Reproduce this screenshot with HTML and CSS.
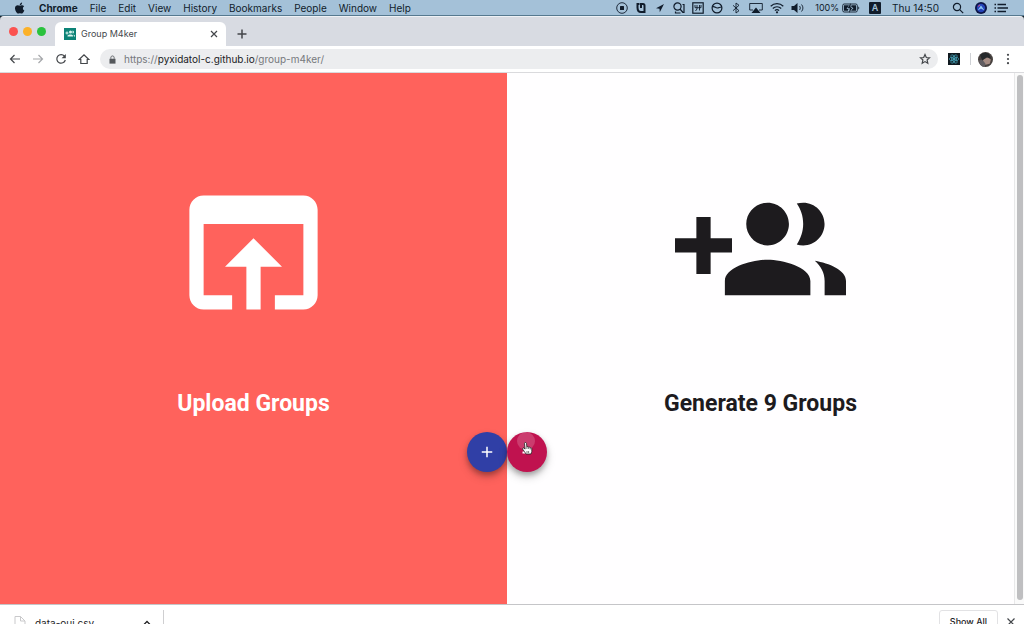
FILE: index.html
```html
<!DOCTYPE html>
<html lang="en">
<head>
<meta charset="utf-8">
<meta name="viewport" content="width=device-width, initial-scale=1">
<title>Group M4ker</title>
<link rel="stylesheet" href="styles.css">
</head>
<body>
<header class="menubar">
  <svg class="apple" viewBox="0 0 24 24" aria-hidden="true"><path d="M16.2 1c.2 1.600-.4 3-1.300 4.100-.9 1-2.300 1.800-3.600 1.700-.2-1.500.5-3 1.400-4 .9-1 2.400-1.700 3.500-1.800zM20.700 17.200c-.6 1.300-.9 1.900-1.600 3-1 1.600-2.500 3.300-4 3-1.200 0-1.600-.8-3.300-.8s-2.100.8-3.400.8c-1.700 0-3-1.700-4-3.200C1.500 15.500 1.200 10.300 3.600 8.100c1-1.200 2.400-1.800 3.800-1.800 1.600 0 2.900 1 4.200 1 1.200 0 2.400-1 4.500-1 1.600 0 3.200.8 4.200 2.200-3.700 2.200-3.100 7.200.4 8.700z"/></svg>
  <nav class="menus" aria-label="Application menu">
    <button class="menu menu-app">Chrome</button><button class="menu">File</button><button class="menu">Edit</button><button class="menu">View</button><button class="menu">History</button><button class="menu">Bookmarks</button><button class="menu">People</button><button class="menu">Window</button><button class="menu">Help</button>
  </nav>
  <div class="status">
    <svg class="glyph" viewBox="0 0 12 12"><circle cx="6" cy="6" r="5.300" class="line thin"/><rect x="4" y="4" width="4" height="4" rx=".5"/></svg>
    <svg class="glyph" viewBox="0 0 12 12"><path class="line heavy" d="M4.500 2H2.500v3.500c0 3 1 4.500 3.500 4.500h3.500V3.500C9.500 2.500 9 2 8 2H6v4"/></svg>
    <svg class="glyph" viewBox="0 0 12 12"><path d="M10 2L2 6.300l3.500.4.300 3.500z"/></svg>
    <svg class="glyph" viewBox="0 0 12 12"><circle cx="4.500" cy="4.500" r="3.600" class="line"/><path class="line" d="M7 7l3 3.500M9.500 2.500H11v8H9.500M2.500 9.500v1.500h5"/></svg>
    <svg class="glyph" viewBox="0 0 12 12"><rect x=".8" y=".8" width="10.400" height="10.400" class="line"/><path class="line thin" d="M5 3v4L3.500 9M7.500 3v5.500M3 5.700h6M9 3v2.700M3 3v2.700"/></svg>
    <svg class="glyph" viewBox="0 0 12 12"><circle cx="6" cy="6" r="4.900" class="line"/><path class="line" d="M1.500 4.800c2-.8 3 1.200 4.700 1.200S8.700 5 10.500 5"/></svg>
    <svg class="glyph" viewBox="0 0 12 12"><path class="line thin" d="M3 3.300l6 5.400L6 11V1l3 2.300-6 5.400"/></svg>
    <svg class="glyph glyph-wide" viewBox="0 0 14 12"><path class="line thin" d="M4 8H.7V1.500h12.600V8H10"/><path d="M7 5.500l4.500 5.500h-9z"/></svg>
    <svg class="glyph glyph-wide" viewBox="0 0 14 12"><path class="line" d="M.7 4.200c3.500-3.400 9.100-3.400 12.600 0M2.800 6.500c2.300-2.300 6.100-2.300 8.400 0M4.900 8.600c1.200-1.100 3-1.100 4.200 0"/><circle cx="7" cy="10.300" r="1.100"/></svg>
    <svg class="glyph glyph-wide" viewBox="0 0 14 12"><path d="M.5 4H3l3.500-3v10L3 8H.5z"/><path class="line thin" d="M8.500 4c1 1.200 1 2.800 0 4M10.500 2.500c1.900 2 1.900 5 0 7"/></svg>
    <span class="charge">100%</span>
    <svg class="battery" viewBox="0 0 18 12"><rect x=".7" y="2" width="14.600" height="8" rx="1.500" class="line thin"/><path d="M2 3.300h5L4.500 7h2l-.7 1.700H2zM9.500 3.300H14v5.400H9L11.500 6H9zM8.800 1L5.500 6.300h2.300L7 11l3.800-5.700H8.500z"/><path d="M16.300 4.500c1.300.3 1.300 2.700 0 3z"/></svg>
    <span class="input-source">A</span>
    <time class="clock">Thu 14:50</time>
    <svg class="glyph" viewBox="0 0 12 12"><circle cx="5" cy="5" r="3.600" class="line"/><path class="line" d="M7.700 7.700l3.500 3.500"/></svg>
    <svg class="siri" viewBox="0 0 12 12"><circle cx="6" cy="6" r="6" fill="#0b1445"/><circle cx="6" cy="6" r="4.200" fill="#2543b8"/><path d="M2.500 8.500L6 3.500l3.500 5L6 6.500z" fill="#86c5f5"/><path d="M3 4.500l2-1.500" stroke="#d94680"/></svg>
    <svg class="glyph glyph-list" viewBox="0 0 14 12"><path class="line bold" d="M3.500 2.500H12M3.500 6H14M3.500 9.500H12M.5 2.500H2M.5 6H2M.5 9.500H2"/></svg>
  </div>
</header>
<div class="browser">
  <div class="tabstrip">
    <div class="lights"><button class="light red" aria-label="Close window"></button><button class="light amber" aria-label="Minimize"></button><button class="light green" aria-label="Zoom"></button></div>
    <div class="tab">
      <svg class="favicon" viewBox="0 0 24 24"><path fill="#0c8377" d="M0 0h24v24H0z"/><path fill="#d9f5ef" d="M3 9h2V7h2v2h2v2H7v2H5v-2H3zM10 8a3 3 0 0 1 6 0 3 3 0 0 1-6 0zM17 5a3 3 0 0 1 0 6zM7 17v-2c2-3 10-3 11 0v2zM19 13l3 2v2h-2z"/></svg>
      <span class="tab-title">Group M4ker</span>
      <button class="icon-button tab-close" aria-label="Close tab"><svg viewBox="0 0 12 12"><path class="line" d="M3 3l6 6M9 3L3 9"/></svg></button>
    </div>
    <button class="icon-button new-tab" aria-label="New tab"><svg viewBox="0 0 12 12"><path class="line bold" d="M6 1.500v9M1.500 6h9"/></svg></button>
  </div>
  <div class="toolbar">
    <button class="icon-button" aria-label="Back"><svg viewBox="0 0 12 12"><path class="line" d="M11 6H1.500M5.500 2l-4 4 4 4"/></svg></button>
    <button class="icon-button muted" aria-label="Forward"><svg viewBox="0 0 12 12"><path class="line" d="M1 6h9.500M6.500 2l4 4-4 4"/></svg></button>
    <button class="icon-button" aria-label="Reload"><svg viewBox="0 0 12 12"><path class="line" d="M9.500 3.200A4.300 4.300 0 1 0 10.300 7"/><path d="M10.800 1v4.200H6.600z"/></svg></button>
    <button class="icon-button" aria-label="Home"><svg viewBox="0 0 12 12"><path class="line" d="M1.200 6.500L6 1.800l4.800 4.700H9.200v4H2.800v-4z"/></svg></button>
    <div class="omnibox">
      <svg class="lock" viewBox="0 0 12 12"><path d="M2 5h8v6.500H2z"/><path class="line" d="M3.800 5V3.500c0-3 4.400-3 4.400 0V5"/></svg>
      <a class="url" href="#"><span>https://</span><span class="host">pyxidatol-c.github.io</span><span>/group-m4ker/</span></a>
      <button class="icon-button star" aria-label="Bookmark this page"><svg viewBox="0 0 12 12"><path class="line" d="M6 1.500l1.300 3 3.200.3-2.400 2.200.7 3.200L6 8.600l-2.800 1.600.7-3.200-2.400-2.200 3.200-.3z"/></svg></button>
    </div>
    <svg class="extension" viewBox="0 0 12 12"><path fill="#10191f" d="M0 0h12v12H0z"/><g fill="none" stroke="#46a6bd" stroke-width=".7"><ellipse cx="6" cy="6" rx="4.800" ry="1.900"/><ellipse cx="6" cy="6" rx="4.800" ry="1.900" transform="rotate(60 6 6)"/><ellipse cx="6" cy="6" rx="4.800" ry="1.900" transform="rotate(120 6 6)"/></g><circle cx="6" cy="6" r="1" fill="#5cc8df"/></svg>
    <span class="separator"></span>
    <svg class="avatar" viewBox="0 0 14 14"><circle cx="7" cy="7" r="7" fill="#47413f"/><path d="M5 7l4-2 3 2-1 4-4 1-3-3z" fill="#a68c83"/><path d="M1 8l3-1 3 4-1 3c-3 0-5-3-5-6z" fill="#625e62"/><path d="M2 3c3-3 7-3 9 0l1 3-4-1-4 3z" fill="#25292b"/></svg>
    <button class="icon-button more" aria-label="More"><svg viewBox="0 0 12 12"><circle cx="6" cy="1.800" r="1.100"/><circle cx="6" cy="6" r="1.100"/><circle cx="6" cy="10.200" r="1.100"/></svg></button>
  </div>
</div>
<main class="viewport">
  <div class="panels">
    <button class="panel upload">
      <svg class="hero" viewBox="0 0 24 24"><path d="M19 4H5c-1.110 0-2 .9-2 2v12c0 1.100.89 2 2 2h4v-2H5V8h14v10h-4v2h4c1.100 0 2-.9 2-2V6c0-1.100-.89-2-2-2zm-7 6l-4 4h3v6h2v-6h3l-4-4z"/></svg>
      <span class="caption">Upload Groups</span>
    </button>
    <button class="panel generate">
      <svg class="hero" viewBox="0 0 24 24"><path d="M8 10H5V7H3v3H0v2h3v3h2v-3h3v-2zm10 1c1.660 0 2.990-1.340 2.990-3S19.660 5 18 5c-.32 0-.63.05-.91.14.57.81.9 1.790.9 2.860s-.34 2.040-.9 2.860c.28.09.59.14.91.14zm-5 0c1.660 0 2.990-1.340 2.990-3S14.660 5 13 5c-1.660 0-3 1.340-3 3s1.340 3 3 3zm6.620 2.160c.83.73 1.380 1.660 1.380 2.840v2h3v-2c0-1.540-2.370-2.490-4.380-2.840zM13 13c-2 0-6 1-6 3v2h12v-2c0-2-4-3-6-3z"/></svg>
      <span class="caption">Generate 9 Groups</span>
    </button>
    <div class="fabs">
      <button class="fab add" aria-label="More groups"><svg viewBox="0 0 24 24"><path d="M19 13h-6v6h-2v-6H5v-2h6V5h2v6h6v2z"/></svg></button>
      <button class="fab remove" aria-label="Fewer groups"><svg viewBox="0 0 40 40"><circle cx="19" cy="9" r="9" fill="#fff" fill-opacity=".18"/><path d="M15.500 19.500h8v2h-8z" fill="#fff"/><path d="M17.500 11.500c0-1.300 1.900-1.300 2 0l.4 3.500c.7-.6 1.500-.4 1.700.3.700-.4 1.400-.1 1.600.5.900-.3 1.600.2 1.600 1.200v2.500c0 1-.8 1.500-.8 2.500h-5c-.7-2-2.500-3-3.300-4.800-.4-1.200.7-1.700 1.400-1l1 .9z" fill="#fff" stroke="#222" stroke-width=".8"/><path d="M19.900 15v2M21.600 15.500V17M23.200 16v1.500M20 19v2M21.600 19v2" stroke="#222" stroke-width=".6"/></svg></button>
    </div>
  </div>
  <div class="scrollbar"><div class="thumb"></div></div>
</main>
<footer class="shelf">
  <button class="download">
    <svg class="file" viewBox="0 0 12 16"><path d="M1 .5h5.500L11 5v10.500H1zM6.500.5V5H11" fill="#fff" stroke="#c9c9cb"/></svg>
    <span class="filename">data-oui.csv</span>
    <svg class="chevron" viewBox="0 0 12 12"><path class="line bold" d="M2 7l4-4 4 4"/></svg>
  </button>
  <button class="show-all">Show All</button>
  <button class="icon-button shelf-close" aria-label="Close downloads"><svg viewBox="0 0 12 12"><path class="line" d="M2.500 2.500l7 7M9.500 2.500l-7 7"/></svg></button>
</footer>
</body>
</html>
```
FILE: styles.css
```css
* { box-sizing: border-box; }
body {
  margin: 0;
  height: 100vh;
  display: flex;
  flex-direction: column;
  overflow: hidden;
  background: #fff;
  color: #1d1d1f;
  font: 10px/16px Inter, "Liberation Sans", sans-serif;
}
button {
  margin: 0;
  padding: 0;
  border: 0;
  background: none;
  color: inherit;
  font: inherit;
}
svg { display: block; flex: none; fill: currentColor; }
.line { fill: none; stroke: currentColor; stroke-width: 1.2; }
.thin { stroke-width: 0.9; }
.bold { stroke-width: 1.5; }
.heavy { stroke-width: 2; }

.menubar {
  flex: none;
  display: flex;
  align-items: center;
  height: 16px;
  padding: 0 16px 0 14px;
  background: #a4c1d8;
  border-bottom: 1px solid #56798f;
  color: #101c2b;
}
.apple { width: 12px; height: 12px; margin-right: 13px; }
.menus { display: flex; gap: 12px; }
.menu-app { font-weight: 700; }
.status { display: flex; align-items: center; gap: 7px; margin-left: auto; white-space: nowrap; }
.glyph { width: 12px; height: 12px; }
.glyph-wide, .glyph-list { width: 14px; }
.charge { font-size: 9px; margin-left: 3px; }
.battery { width: 18px; height: 12px; margin-left: -4px; }
.input-source {
  width: 12px;
  height: 12px;
  margin: 0 4px 0 2px;
  border-radius: 1px;
  background: #101c2b;
  color: #a4c1d8;
  font-size: 9px;
  font-weight: 600;
  line-height: 12px;
  text-align: center;
}
.clock { margin-right: 6px; }
.siri { width: 12px; height: 12px; margin-left: 4px; }

.browser { flex: none; background: #14202b; }
.tabstrip {
  display: flex;
  align-items: flex-end;
  height: 30px;
  padding-left: 9px;
  border-top: 1px solid #eef1f5;
  border-radius: 4px 4px 0 0;
  background: #d8dbe2;
}
.lights { display: flex; gap: 5px; align-self: center; }
.light { width: 9px; height: 9px; border-radius: 50%; }
.red { background: #fb5350; }
.amber { background: #fcb128; }
.green { background: #2ac23d; }
.tab {
  display: flex;
  align-items: center;
  width: 171px;
  height: 24px;
  margin-left: 9px;
  padding: 0 6px 0 9px;
  border-radius: 6px 6px 0 0;
  background: #fff;
}
.favicon { width: 12px; height: 12px; }
.tab-title { margin-left: 5px; font-size: 9px; color: #45484c; }
.icon-button { display: block; flex: none; width: 12px; height: 12px; color: #43464a; }
.icon-button svg { width: 100%; height: 100%; }
.muted { color: #a5a7aa; }
.tab-close { margin-left: auto; }
.new-tab { align-self: center; margin: 4px 0 0 10px; }
.toolbar {
  display: flex;
  align-items: center;
  gap: 11px;
  height: 27px;
  padding: 0 10px 0 9px;
  border-bottom: 1px solid #dadadd;
  background: #fff;
}
.omnibox {
  flex: 1;
  display: flex;
  align-items: center;
  height: 20px;
  margin: 0 -1px;
  padding: 0 7px 0 8px;
  border-radius: 10px;
  background: #ecedef;
}
.lock { width: 9px; height: 9px; color: #55585c; }
.url { margin-left: 7px; color: #76797d; text-decoration: none; }
.host { color: #202124; }
.star { margin-left: auto; }
.extension { width: 12px; height: 12px; }
.separator { width: 1px; height: 12px; margin: 0 -4px 0 -1px; background: #cfd1d5; }
.avatar { width: 15px; height: 15px; }
.more { margin-left: -2px; }

.viewport { flex: 1; display: flex; min-height: 0; }
.panels { position: relative; flex: 1; display: grid; grid-template-columns: 1fr 1fr; }
.panel {
  display: flex;
  flex-direction: column;
  align-items: center;
  justify-content: center;
  gap: 48px;
  padding-bottom: 88px;
}
.upload { background: #ff625c; color: #fff; }
.generate { background: #fffeff; color: #1d1b1e; }
.hero { width: 171px; height: 171px; }
.caption { font: 700 23px/36px Roboto, sans-serif; }
.fabs {
  position: absolute;
  top: 359px;
  left: 50%;
  display: flex;
  transform: translateX(-50%);
}
.fab {
  display: flex;
  align-items: center;
  justify-content: center;
  width: 40px;
  height: 40px;
  border-radius: 50%;
  box-shadow: 0 3px 5px rgba(0, 0, 0, 0.25), 0 5px 10px rgba(0, 0, 0, 0.18);
}
.add { background: #303fa6; color: #fff; }
.add svg { width: 18px; height: 18px; }
.remove { background: #c0124f; }
.remove svg { width: 40px; height: 40px; }
.scrollbar { width: 10px; padding: 2px 1px 4px 2px; border-left: 1px solid #e8e8e9; background: #fafafa; }
.thumb { width: 6px; height: 100%; border-radius: 3px; background: #bfbfc1; }

.shelf {
  flex: none;
  display: flex;
  align-items: flex-start;
  height: 20px;
  padding: 5px 7px 0 0;
  overflow: hidden;
  border-top: 1px solid #c5c5c8;
  background: #fff;
}
.download {
  display: flex;
  align-items: flex-start;
  width: 164px;
  height: 32px;
  padding: 6px 11px 0 14px;
  border-right: 1px solid #cfcfd1;
}
.file { width: 12px; height: 16px; }
.filename { margin-left: 9px; line-height: 14px; }
.chevron { width: 10px; height: 10px; margin: 3px 0 0 auto; }
.show-all {
  width: 59px;
  height: 24px;
  margin: 0 7px 0 auto;
  border: 1px solid #e2e2e4;
  border-radius: 3px;
  font-size: 9px;
  font-weight: 500;
}
.shelf-close { margin-top: 6px; }
```
